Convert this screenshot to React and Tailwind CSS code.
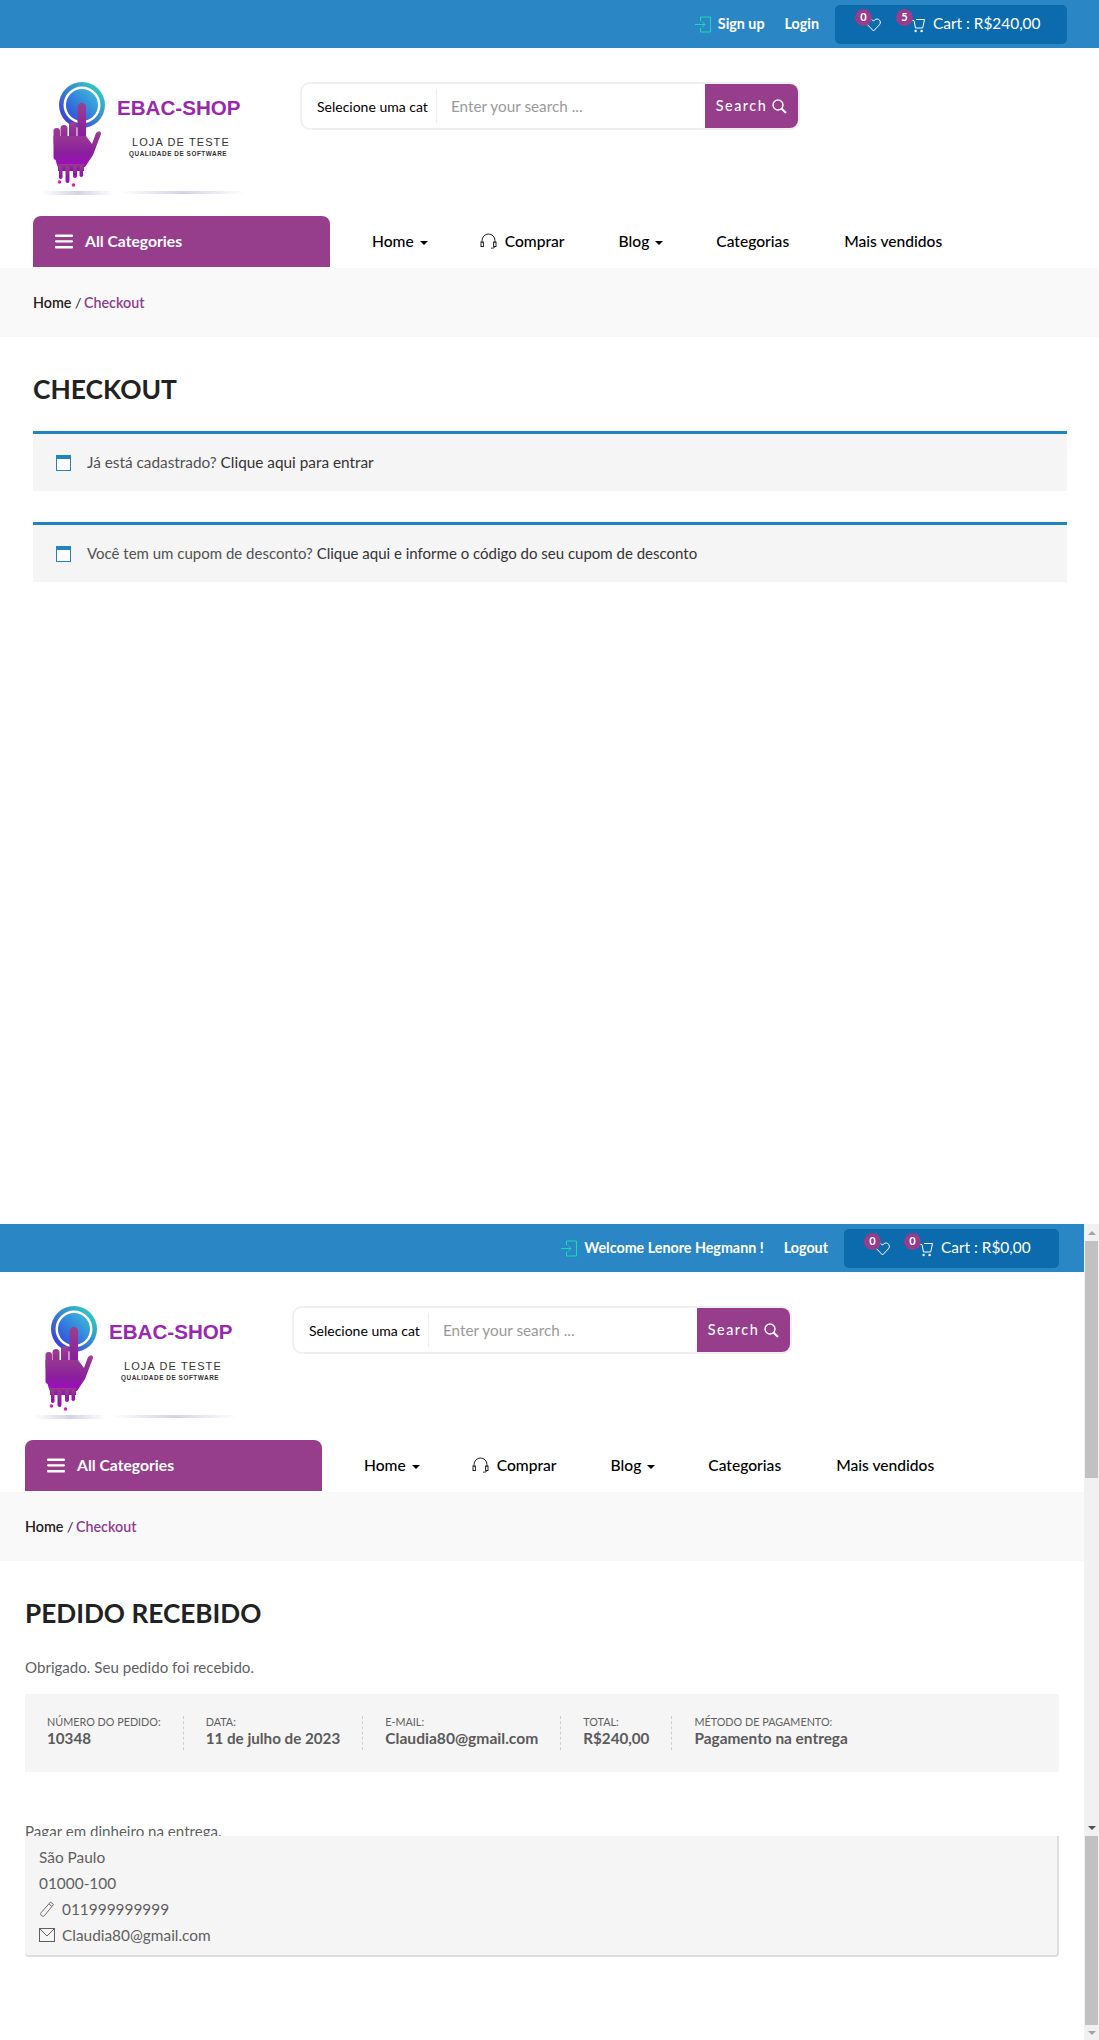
import { useId } from 'react'

function Logo() {
  const id = useId()
  return (
    <svg width="240" height="150" viewBox="3 0 240 150" className="shrink-0">
      <defs>
        <linearGradient id={id + 'ring'} x1="0" y1="1" x2="1" y2="0">
          <stop offset="0" stopColor="#3f27d8" />
          <stop offset="1" stopColor="#2fe0c0" />
        </linearGradient>
        <linearGradient id={id + 'disc'} x1="0" y1="1" x2="1" y2="0">
          <stop offset="0" stopColor="#2d45e0" />
          <stop offset="1" stopColor="#3cc4d8" />
        </linearGradient>
        <linearGradient id={id + 'hand'} x1="0" y1="0" x2="0" y2="1">
          <stop offset="0" stopColor="#9c3f90" />
          <stop offset="0.6" stopColor="#8a1f9c" />
          <stop offset="1" stopColor="#a00cc0" />
        </linearGradient>
        <linearGradient id={id + 'shade'} x1="0" y1="0" x2="1" y2="0">
          <stop offset="0" stopColor="#b9b4d8" stopOpacity="0" />
          <stop offset="0.5" stopColor="#b9b4d8" stopOpacity="0.6" />
          <stop offset="1" stopColor="#b9b4d8" stopOpacity="0" />
        </linearGradient>
      </defs>
      <circle cx="52" cy="45" r="23" fill={`url(#${id}ring)`} />
      <circle cx="52" cy="45" r="18.5" fill="#fff" />
      <circle cx="52" cy="45" r="16" fill={`url(#${id}disc)`} />
      <g fill={`url(#${id}hand)`}>
        <rect x="23.5" y="68" width="6.5" height="32" rx="3" />
        <rect x="30.5" y="65" width="7" height="32" rx="3.5" />
        <rect x="39" y="62" width="7.5" height="32" rx="3.5" />
        <rect x="47.5" y="43" width="8.5" height="52" rx="4.2" />
        <path d="M23.5 76L56 76L62 84L66 73Q71 69 71 74L63 95L55 107L28 107Q24 100 23.5 76Z" />
        <rect x="28" y="104" width="26" height="7" />
        <rect x="29" y="106" width="3.5" height="13" rx="1.7" />
        <rect x="35.5" y="106" width="4" height="17" rx="2" />
        <rect x="43" y="106" width="4" height="12" rx="2" />
        <rect x="49.5" y="106" width="3.5" height="11" rx="1.7" />
      </g>
      <circle cx="29.5" cy="122" r="1.8" fill="#d81fa8" />
      <circle cx="43.5" cy="125" r="1.8" fill="#d81fa8" />
      <text x="87" y="54.5" fontFamily="'Liberation Sans', Arial, sans-serif" fontWeight="700" fontSize="20.6" fill="#9a28ae">EBAC-SHOP</text>
      <text x="102" y="86" fontFamily="'Liberation Sans', Arial, sans-serif" fontSize="11" letterSpacing="1.1" fill="#333">LOJA DE TESTE</text>
      <text x="99" y="96" fontFamily="'Liberation Sans', Arial, sans-serif" fontWeight="700" fontSize="6.4" letterSpacing="0.55" fill="#333">QUALIDADE DE SOFTWARE</text>
      <rect x="12" y="131" width="72" height="4" fill={`url(#${id}shade)`} />
      <rect x="90" y="131" width="125" height="3" fill={`url(#${id}shade)`} />
    </svg>
  )
}

function SignInIcon() {
  return (
    <svg width="16" height="17" viewBox="0 0 16 17" fill="none" stroke="#17dcb4" strokeWidth="1" className="shrink-0">
      <path d="M5.5 5V1h10v15h-10v-4" />
      <path d="M0 8.5h10M7 5.5l3 3-3 3" />
    </svg>
  )
}

function HeartIcon() {
  return (
    <svg width="15" height="14" viewBox="0 0 15 14" fill="none" stroke="#fff" strokeWidth="1" className="shrink-0">
      <path d="M7.5 13L1.6 6.8C0 5 .5 2.4 2.4 1.4 4.2.5 6.2 1.2 7.5 3.2 8.8 1.2 10.8.5 12.6 1.4c1.9 1 2.4 3.6.8 5.4L7.5 13z" />
    </svg>
  )
}

function CartIcon() {
  return (
    <svg width="14" height="15" viewBox="0 0 14 15" fill="none" stroke="#fff" strokeWidth="1" className="shrink-0">
      <path d="M0 2.5h3l1.5 7.5h7.2L13.5 1.5H5" />
      <circle cx="4.6" cy="13" r="1.2" fill="#fff" stroke="none" />
      <circle cx="10.6" cy="13" r="1.2" fill="#fff" stroke="none" />
    </svg>
  )
}

function Badge({ n, className }) {
  return (
    <span className={`absolute w-[17px] h-[17px] rounded-full bg-[#963d8c] text-white text-[11px] font-bold flex items-center justify-center ${className}`}>
      {n}
    </span>
  )
}

function Caret() {
  return <span className="ml-[6px] inline-block w-0 h-0 border-x-[4px] border-x-transparent border-t-[4px] border-t-current align-middle" />
}

function NoticeIcon() {
  return (
    <span className="w-[15px] h-[16px] shrink-0 border border-[#1e85be] border-t-[4px] bg-white block" />
  )
}

function Header({ inset, user, total, items, boxWidth, heartGap }) {
  return (
    <div className="font-['Lato',sans-serif]">
      <div className={`h-12 bg-[#2b86c5] flex items-center justify-end ${inset}`}>
        <div className="flex items-center text-white text-[14.3px] font-bold">
          <SignInIcon />
          {user ? (
            <>
              <span className="ml-[7px]">Welcome {user} !</span>
              <span className="ml-5 mr-4">Logout</span>
            </>
          ) : (
            <>
              <span className="ml-[7px]">Sign up</span>
              <span className="ml-5 mr-4">Login</span>
            </>
          )}
        </div>
        <div className={`h-[39px] rounded-[5px] bg-[#0c6bac] flex items-center pl-[31px] text-white text-[15.4px] ${boxWidth}`}>
          <span className="relative mt-[2px]">
            <Badge n="0" className="-left-[11px] -top-[9px]" />
            <HeartIcon />
          </span>
          <span className={`relative mt-[2px] ${heartGap}`}>
            <Badge n={items} className="-left-[15px] -top-[9px]" />
            <CartIcon />
          </span>
          <span className="ml-[8px]">Cart : {total}</span>
        </div>
      </div>

      <div className={`flex items-start h-[168px] ${inset}`}>
        <div className="mt-[12px]"><Logo /></div>
        <div className="mt-[34px] ml-[27px] w-[500px] h-[48px] border-2 border-[#f0f0f0] rounded-[10px] flex items-center">
          <span className="pl-[15px] w-[135px] text-[14px] text-black border-r border-[#eee] h-[34px] flex items-center whitespace-nowrap overflow-hidden">Selecione uma cat</span>
          <span className="pl-[14px] flex-1 text-[15.3px] text-[#999]">Enter your search ...</span>
          <span className="w-[93px] h-full bg-[#963d8c] rounded-r-[8px] text-white text-[14.4px] font-medium tracking-[1.5px] flex items-center justify-center gap-[5px]">
            Search
            <svg width="15" height="15" viewBox="0 0 15 15" fill="none" stroke="#fff" strokeWidth="1.4">
              <circle cx="6" cy="6" r="5" />
              <path d="M9.5 9.5L14 14" strokeWidth="2" />
            </svg>
          </span>
        </div>
      </div>

      <div className={`flex items-start h-[52px] ${inset}`}>
        <div className="w-[297px] h-[51px] bg-[#963d8c] rounded-t-[8px] flex items-center pl-[22px] text-white text-[15.7px] font-bold">
          <svg width="18" height="15" viewBox="0 0 18 15" fill="#fff"><rect width="18" height="2.4" y="0.5" rx="1" /><rect width="18" height="2.4" y="6.2" rx="1" /><rect width="18" height="2.4" y="12" rx="1" /></svg>
          <span className="ml-[12px]">All Categories</span>
        </div>
        <div className="h-[51px] flex items-center pl-[42px] text-[15.6px] font-medium text-black">
          <span>Home<Caret /></span>
          <span className="ml-[52px] flex items-center">
            <svg width="17" height="16" viewBox="0 0 17 16" fill="none" stroke="#222" strokeWidth="1">
              <path d="M2 10V7.5a6.5 6.5 0 0113 0V10" />
              <rect x="1" y="9" width="2.4" height="4.5" />
              <rect x="13.6" y="9" width="2.4" height="4.5" />
              <path d="M15 13.5c0 1.2-1.5 1.7-4 1.7" />
            </svg>
            <span className="ml-[8px]">Comprar</span>
          </span>
          <span className="ml-[54px]">Blog<Caret /></span>
          <span className="ml-[53px]">Categorias</span>
          <span className="ml-[55px]">Mais vendidos</span>
        </div>
      </div>

      <div className={`h-[69px] bg-[#f9f9f9] flex items-center text-[14.3px] font-semibold text-[#222] ${inset}`}>
        <span>Home <span className="font-normal">/</span> <span className="ml-[-1px] text-[#8b3d90]">Checkout</span></span>
      </div>
    </div>
  )
}

function Notice({ lead, link, size }) {
  return (
    <div className={`h-[60px] border-t-[3px] border-[#1e85be] bg-[#f5f5f5] flex items-center pl-[23px] ${size}`}>
      <NoticeIcon />
      <span className="ml-[16px] text-[#515151]">{lead} <span className="text-[#333]">{link}</span></span>
    </div>
  )
}

function OrderItem({ label, value, last, size = 'text-[15.2px]' }) {
  return (
    <div className={`h-[34px] ${last ? '' : 'mr-[22px] pr-[22px] border-r border-dashed border-[#d3ced2]'}`}>
      <div className="text-[10.8px] leading-[12px] uppercase text-[#5f5f5f]">{label}</div>
      <div className={`leading-[20px] font-bold text-[#5a5a5a] ${size}`}>{value}</div>
    </div>
  )
}

function Scrollbar() {
  return (
    <div className="w-[15px] shrink-0 bg-[#f1f1f1] flex flex-col items-center">
      <div className="h-[17px] flex items-center justify-center">
        <span className="w-0 h-0 border-x-[4px] border-x-transparent border-b-[4px] border-b-[#a3a3a3]" />
      </div>
      <div className="w-[13px] h-[237px] bg-[#c1c1c1]" />
      <div className="flex-1" />
      <div className="h-[17px] flex items-center justify-center">
        <span className="w-0 h-0 border-x-[4px] border-x-transparent border-t-[4px] border-t-[#505050]" />
      </div>
      <div className="w-[13px] h-[189px] bg-[#c1c1c1]" />
      <div className="h-[15px] flex items-center justify-center">
        <span className="w-0 h-0 border-x-[4px] border-x-transparent border-t-[4px] border-t-[#a3a3a3]" />
      </div>
    </div>
  )
}

export default function App() {
  return (
    <div className="w-[1099px] h-[2040px] bg-white overflow-hidden font-['Lato',sans-serif]">
      {/* first capture */}
      <div className="h-[1224px]">
        <Header inset="pl-[33px] pr-[32px]" total="R$240,00" items="5" boxWidth="w-[232px]" heartGap="ml-[30px]" />
        <div className="pl-[33px] pr-[32px]">
          <h1 className="mt-[36px] text-[26.4px] leading-[32px] font-bold text-[#222] uppercase">Checkout</h1>
          <div className="mt-[26px]">
            <Notice size="text-[15.35px]" lead="Já está cadastrado?" link="Clique aqui para entrar" />
          </div>
          <div className="mt-[31px]">
            <Notice size="text-[15px]" lead="Você tem um cupom de desconto?" link="Clique aqui e informe o código do seu cupom de desconto" />
          </div>
        </div>
      </div>

      {/* second capture */}
      <div className="h-[816px] flex">
        <div className="w-[1084px]">
          <div className="h-[612px] overflow-hidden">
            <Header inset="px-[25px]" user="Lenore Hegmann" total="R$0,00" items="0" boxWidth="w-[215px]" heartGap="ml-[29px]" />
            <div className="px-[25px]">
              <h1 className="mt-[36px] text-[26.2px] leading-[32px] font-bold text-[#222] uppercase">Pedido recebido</h1>
              <p className="mt-[27px] text-[15.1px] leading-[22px] text-[#5f5f5f]">Obrigado. Seu pedido foi recebido.</p>
              <div className="mt-[16px] h-[78px] bg-[#f5f5f5] flex pl-[22px] pt-[22px]">
                <OrderItem label="Número do pedido:" value="10348" />
                <OrderItem label="Data:" value="11 de julho de 2023" />
                <OrderItem label="E-mail:" value="Claudia80@gmail.com" size="text-[15.6px]" />
                <OrderItem label="Total:" value="R$240,00" />
                <OrderItem label="Método de pagamento:" value="Pagamento na entrega" size="text-[15.4px]" last />
              </div>
              <p className="mt-[48px] text-[15.1px] leading-[22px] text-[#5f5f5f]">Pagar em dinheiro na entrega.</p>
            </div>
          </div>
          <div className="mx-[25px] h-[121px] bg-[#f5f5f5] border-r-2 border-b-2 border-[#ddd] rounded-b-[4px] pl-[14px] pt-[8px] text-[15.4px] leading-[26px] text-[#5f5f5f]">
            <div>São Paulo</div>
            <div>01000-100</div>
            <div className="flex items-center">
              <svg width="16" height="16" viewBox="0 0 16 16" fill="none" stroke="#5f5f5f" strokeWidth="0.9" className="shrink-0">
                <path d="M11.5 1l3 2.5-9 11c-.8.9-2 1-3 .2-1-.8-1.2-2-.4-3L11.5 1z" />
                <path d="M10 3l3 2.5" />
              </svg>
              <span className="ml-[7px]">011999999999</span>
            </div>
            <div className="flex items-center">
              <svg width="16" height="14" viewBox="0 0 16 14" fill="none" stroke="#5f5f5f" strokeWidth="1" className="shrink-0">
                <rect x="0.5" y="0.5" width="15" height="13" />
                <path d="M1 1l7 7 7-7" />
              </svg>
              <span className="ml-[7px]">Claudia80@gmail.com</span>
            </div>
          </div>
        </div>
        <Scrollbar />
      </div>
    </div>
  )
}
